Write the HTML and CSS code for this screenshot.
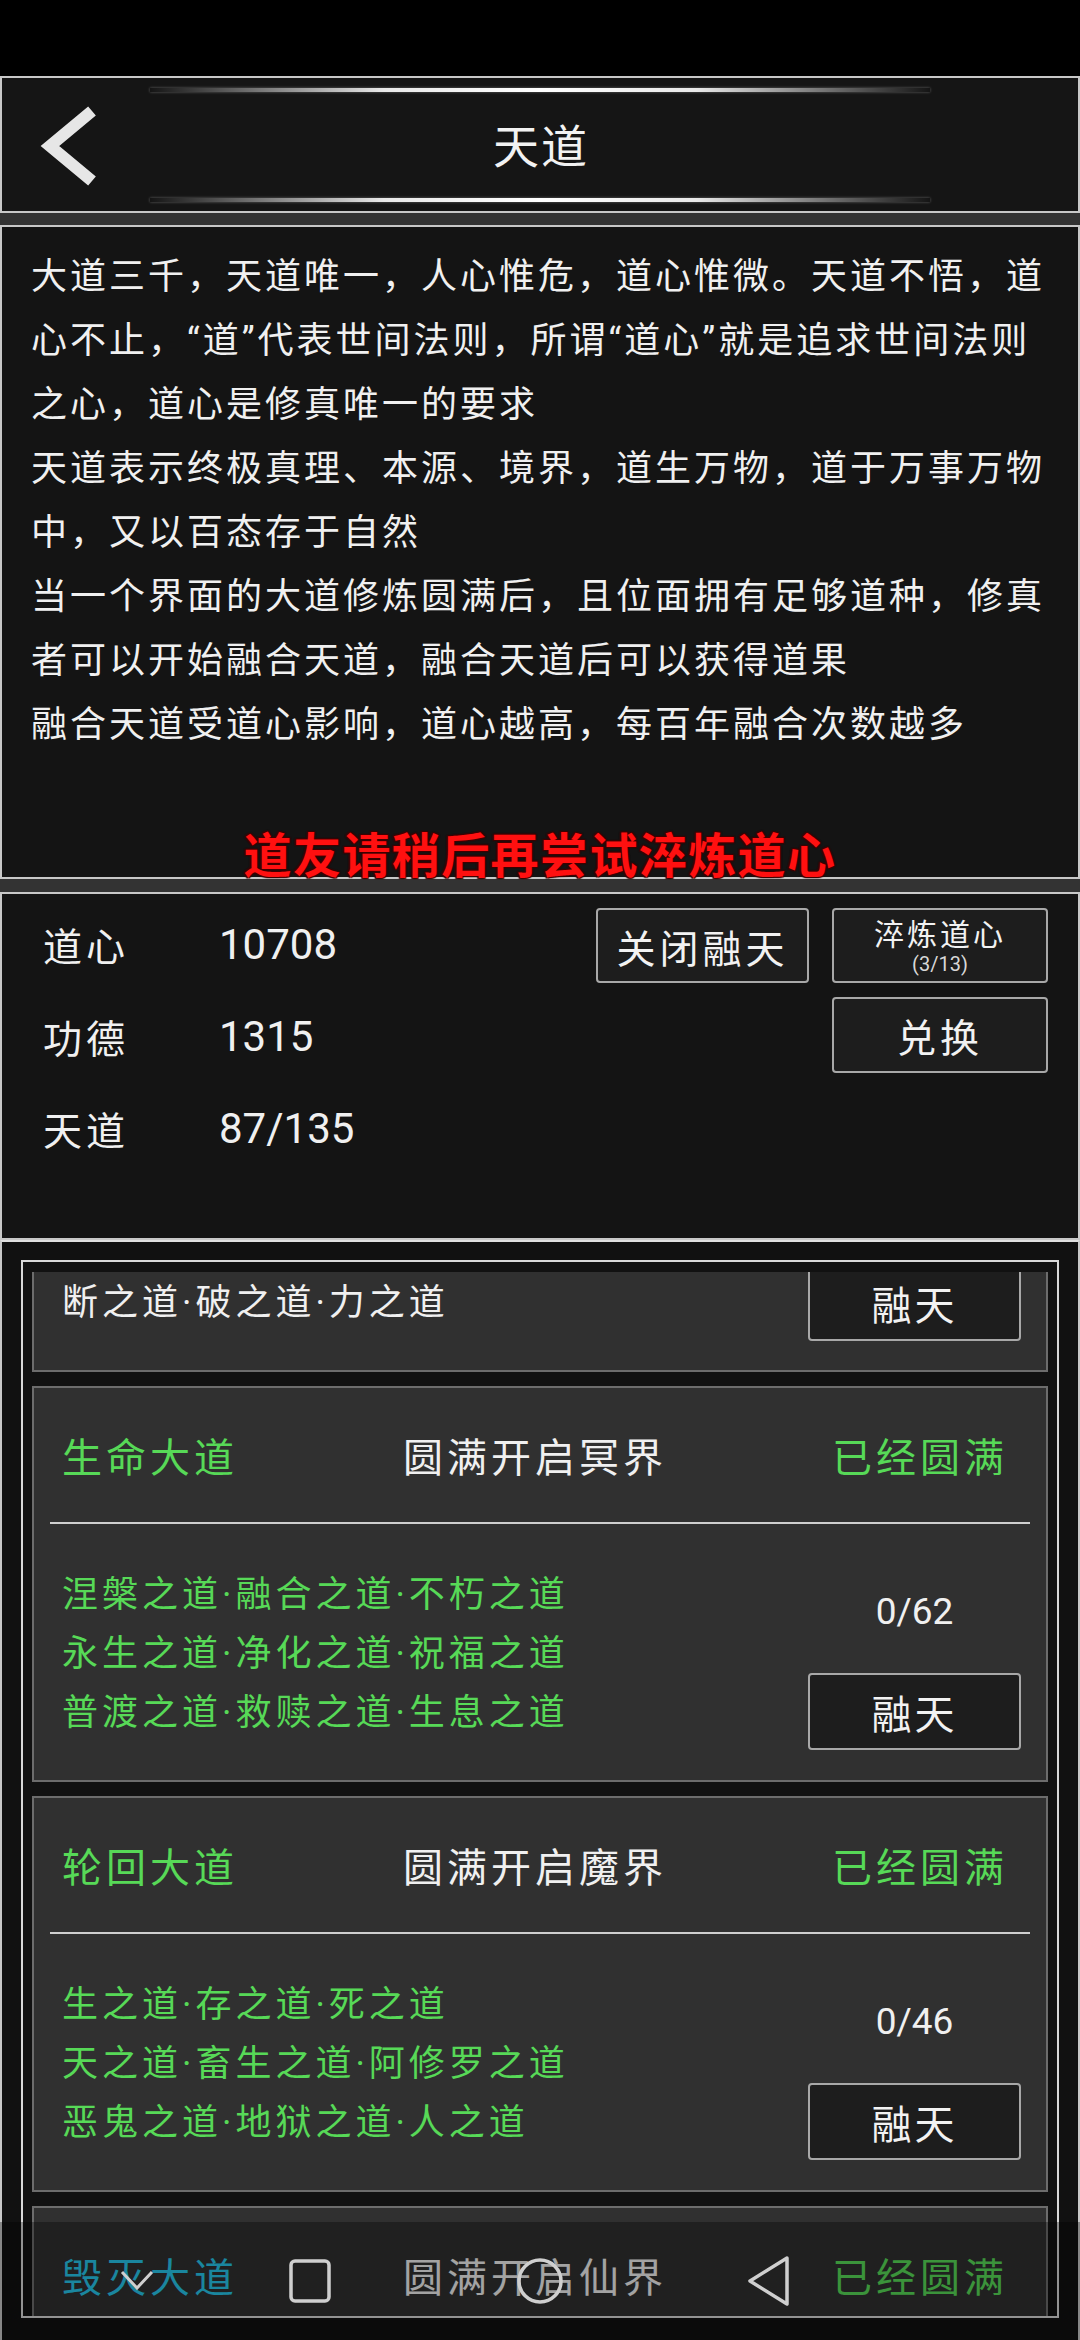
FILE: index.html
```html
<!DOCTYPE html>
<html lang="zh-CN">
<head>
    <meta charset="UTF-8">
    <meta name="viewport" content="width=device-width, initial-scale=1.0">
    <title>天道</title>
    <link rel="stylesheet" href="styles.css">
</head>
<body>
<div class="phone">
    <div class="status-bar"></div>

    <!-- Title bar -->
    <header class="title-panel">
        <div class="glow"></div>
        <div class="title-row">
            <a class="back" href="#">
                <svg width="60" height="84" viewBox="0 0 60 84">
                    <polyline points="52,6 10,41 52,76" fill="none" stroke="#e6e6e6" stroke-width="12"/>
                </svg>
            </a>
            <h1>天道</h1>
            <span></span>
        </div>
        <div class="glow"></div>
    </header>

    <!-- Description -->
    <section class="intro">
        <p>大道三千，天道唯一，人心惟危，道心惟微。天道不悟，道<br>心不止，“道”代表世间法则，所谓“道心”就是追求世间法则<br>之心，道心是修真唯一的要求</p>
        <p>天道表示终极真理、本源、境界，道生万物，道于万事万物<br>中，又以百态存于自然</p>
        <p>当一个界面的大道修炼圆满后，且位面拥有足够道种，修真<br>者可以开始融合天道，融合天道后可以获得道果</p>
        <p>融合天道受道心影响，道心越高，每百年融合次数越多</p>
    </section>

    <!-- Stats -->
    <section class="stats">
        <dl class="stat-list">
            <div class="stat-row"><dt>道心</dt><dd>10708</dd></div>
            <div class="stat-row"><dt>功德</dt><dd>1315</dd></div>
            <div class="stat-row"><dt>天道</dt><dd>87/135</dd></div>
        </dl>
        <div class="stat-actions">
            <button class="btn">关闭融天</button>
            <button class="btn btn-small">淬炼道心<small>(3/13)</small></button>
            <button class="btn btn-exchange">兑换</button>
        </div>
    </section>

    <!-- Dao list (scrolled: first card shows only its tail) -->
    <section class="dao-panel">
        <div class="dao-frame">
            <div class="dao-viewport">
                <ul class="dao-list">
                    <li class="dao-card dao-card-tail">
                        <div class="dao-body">
                            <div class="dao-lines white">
                                <div>断之道·破之道·力之道</div>
                            </div>
                            <div class="dao-side">
                                <button class="btn">融天</button>
                            </div>
                        </div>
                    </li>
                    <li class="dao-card">
                        <div class="dao-head">
                            <span class="green">生命大道</span>
                            <span>圆满开启冥界</span>
                            <span class="green">已经圆满</span>
                        </div>
                        <div class="dao-body">
                            <div class="dao-lines green">
                                <div>涅槃之道·融合之道·不朽之道</div>
                                <div>永生之道·净化之道·祝福之道</div>
                                <div>普渡之道·救赎之道·生息之道</div>
                            </div>
                            <div class="dao-side">
                                <div class="count">0/62</div>
                                <button class="btn">融天</button>
                            </div>
                        </div>
                    </li>
                    <li class="dao-card">
                        <div class="dao-head">
                            <span class="green">轮回大道</span>
                            <span>圆满开启魔界</span>
                            <span class="green">已经圆满</span>
                        </div>
                        <div class="dao-body">
                            <div class="dao-lines green">
                                <div>生之道·存之道·死之道</div>
                                <div>天之道·畜生之道·阿修罗之道</div>
                                <div>恶鬼之道·地狱之道·人之道</div>
                            </div>
                            <div class="dao-side">
                                <div class="count">0/46</div>
                                <button class="btn">融天</button>
                            </div>
                        </div>
                    </li>
                    <li class="dao-card">
                        <div class="dao-head">
                            <span class="blue">毁灭大道</span>
                            <span>圆满开启仙界</span>
                            <span class="green">已经圆满</span>
                        </div>
                    </li>
                </ul>
            </div>
        </div>
    </section>

    <div class="toast">道友请稍后再尝试淬炼道心</div>

    <!-- System navigation bar -->
    <nav class="sys-nav">
        <svg class="nav-hide" width="40" height="26" viewBox="0 0 40 26">
            <polyline points="5,4 20,20 35,4" fill="none" stroke="#cfcfcf" stroke-width="3"/>
        </svg>
        <svg class="nav-recent" width="46" height="46" viewBox="0 0 46 46">
            <rect x="4" y="3" width="38" height="40" rx="4" fill="none" stroke="#cfcfcf" stroke-width="3.5"/>
        </svg>
        <svg class="nav-home" width="50" height="50" viewBox="0 0 50 50">
            <circle cx="25" cy="25" r="21" fill="none" stroke="#cfcfcf" stroke-width="3.5"/>
        </svg>
        <svg class="nav-back" width="48" height="52" viewBox="0 0 48 52">
            <polygon points="42,3 5,26 42,49" fill="none" stroke="#cfcfcf" stroke-width="3.5" stroke-linejoin="round"/>
        </svg>
    </nav>
</div>
</body>
</html>
```

FILE: styles.css
```css
* {
    box-sizing: border-box;
}
body {
    margin: 0;
    background-color: #000;
    font-family: Roboto, "Noto Sans CJK SC", sans-serif;
    color: #f0f0f0;
}
.phone {
    position: relative;
    width: 1080px;
    height: 2340px;
    overflow: hidden;
    background-color: #333;
}
.status-bar {
    height: 76px;
    background-color: #000;
}

/* title bar */
.title-panel {
    height: 137px;
    background-color: #151515;
    border: 2px solid #c8c8c8;
    padding-top: 10px;
    display: flex;
    flex-direction: column;
    align-items: center;
}
.glow {
    width: 780px;
    height: 4px;
    background: linear-gradient(90deg, rgba(255,255,255,0), rgba(255,255,255,0.9) 30%, #fff 50%, rgba(255,255,255,0.9) 70%, rgba(255,255,255,0));
    box-shadow: 0 0 3px rgba(255,255,255,0.35);
}
.title-row {
    width: 100%;
    height: 106px;
    display: grid;
    grid-template-columns: 1fr auto 1fr;
    align-items: center;
    padding: 0 38px;
}
.back {
    display: flex;
    margin-top: 4px;
}
.title-row h1 {
    margin: 0 0 4px 0;
    font-size: 46px;
    font-weight: normal;
    letter-spacing: 2px;
    padding-left: 2px;
    color: #f2f2f2;
}

/* description */
.intro {
    height: 654px;
    margin-top: 12px;
    background-color: #141414;
    border: 2px solid #c8c8c8;
    padding: 18px 10px 0 29px;
}
.intro p {
    margin: 0;
    font-size: 36px;
    line-height: 64px;
    letter-spacing: 3px;
    white-space: nowrap;
}

/* stats */
.stats {
    height: 348px;
    margin-top: 13px;
    background-color: #141414;
    border: 2px solid #c8c8c8;
    padding: 4px 30px 0 41px;
    display: flex;
    justify-content: space-between;
    align-items: flex-start;
}
.stat-list {
    margin: 0;
}
.stat-row {
    display: flex;
    height: 92px;
    align-items: center;
}
.stat-row dt {
    width: 176px;
    font-size: 39px;
    letter-spacing: 4px;
}
.stat-row dd {
    margin: 0;
    font-size: 42px;
}
.stat-actions {
    margin-top: 10px;
    display: grid;
    grid-template-columns: 213px 216px;
    grid-template-rows: 75px 76px;
    column-gap: 23px;
    row-gap: 14px;
}
.btn {
    font-family: Roboto, "Noto Sans CJK SC", sans-serif;
    background-color: #1d1d1d;
    color: #f2f2f2;
    border: 2px solid #a8a8a8;
    border-radius: 4px;
    font-size: 39px;
    letter-spacing: 4px;
    padding: 0;
    display: flex;
    flex-direction: column;
    align-items: center;
    justify-content: center;
}
.btn-small {
    font-size: 30px;
    letter-spacing: 3px;
    line-height: 34px;
    padding-top: 2px;
}
.btn-small small {
    font-size: 20px;
    letter-spacing: 0;
    line-height: 24px;
    color: #d8d8d8;
}
.btn-exchange {
    grid-column: 2;
}

/* dao list */
.dao-panel {
    height: 1100px;
    background-color: #111;
    border-top: 2px solid #e0e0e0;
    border-left: 2px solid #c8c8c8;
    border-right: 2px solid #c8c8c8;
    padding: 18px 19px 0 19px;
}
.dao-frame {
    height: 1058px;
    border: 2px solid #d8d8d8;
    padding: 10px 9px 0 9px;
}
.dao-viewport {
    height: 1044px;
    overflow: hidden;
}
.dao-list {
    list-style: none;
    margin: -10px 0 0 0;
    padding: 0;
    display: flex;
    flex-direction: column;
    gap: 14px;
}
.dao-card {
    height: 396px;
    background-color: #303030;
    border: 2px solid #6c6c6c;
}
.dao-card-tail {
    height: 110px;
    border-top: none;
}
.dao-card-tail .dao-body {
    padding-top: 12px;
}
.dao-card-tail .dao-side {
    margin-top: -10px;
}
.dao-head {
    height: 136px;
    margin: 0 16px;
    padding: 0 22px 0 12px;
    display: grid;
    grid-template-columns: 1fr auto 1fr;
    align-items: center;
    font-size: 40px;
    letter-spacing: 4px;
    border-bottom: 2px solid #cfcfcf;
}
.dao-head span:last-child {
    justify-self: end;
}
.dao-body {
    display: flex;
    justify-content: space-between;
    align-items: flex-start;
    padding: 42px 25px 0 28px;
}
.dao-lines {
    font-size: 36px;
    letter-spacing: 4px;
    line-height: 59px;
}
.dao-side {
    width: 213px;
    margin-top: 16px;
    display: flex;
    flex-direction: column;
    align-items: center;
}
.count {
    font-size: 37px;
    line-height: 59px;
    margin-bottom: 32px;
}
.dao-side .btn {
    width: 213px;
    height: 77px;
    font-size: 40px;
    letter-spacing: 3px;
}
.green {
    color: #57d957;
}
.white {
    color: #f0f0f0;
}
.blue {
    color: #27c6ea;
}

/* overlays */
.toast {
    position: absolute;
    left: 0;
    right: 0;
    top: 827px;
    text-align: center;
    font-size: 48px;
    font-weight: bold;
    line-height: 60px;
    letter-spacing: 1.4px;
    color: #ff1010;
    text-shadow: 0 0 2px #300, 1px 1px 1px #400, -1px -1px 1px #400, 1px -1px 1px #400, -1px 1px 1px #400;
}
.sys-nav {
    position: absolute;
    left: 0;
    right: 0;
    bottom: 0;
    height: 118px;
    background-color: rgba(0, 0, 0, 0.32);
}
.sys-nav svg {
    position: absolute;
}
.nav-hide {
    left: 117px;
    top: 46px;
}
.nav-recent {
    left: 287px;
    top: 36px;
}
.nav-home {
    left: 515px;
    top: 34px;
}
.nav-back {
    left: 745px;
    top: 33px;
}
```
